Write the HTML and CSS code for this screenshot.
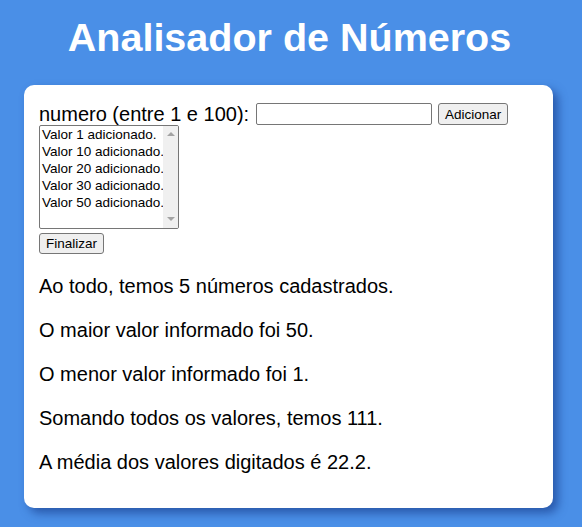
FILE: index.html
```html
<!DOCTYPE html>
<html lang="pt">
<head>
<meta charset="utf-8">
<title>Analisador de Números</title>
<link rel="stylesheet" href="styles.css">
</head>
<body>
<h1 class="title">Analisador de Números</h1>
<main class="card">
  <div class="entry">
    <label class="entry-label" for="num">numero (entre 1 e 100):</label>
    <input class="entry-input" type="number" id="num">
    <button class="btn" type="button">Adicionar</button>
  </div>
  <div class="list" role="listbox">
    <div class="list-items">
      <div class="list-option" role="option">Valor 1 adicionado.</div>
      <div class="list-option" role="option">Valor 10 adicionado.</div>
      <div class="list-option" role="option">Valor 20 adicionado.</div>
      <div class="list-option" role="option">Valor 30 adicionado.</div>
      <div class="list-option" role="option">Valor 50 adicionado.</div>
    </div>
    <div class="scrollbar" aria-hidden="true">
      <span class="arrow arrow-up"></span>
      <span class="arrow arrow-down"></span>
    </div>
  </div>
  <div class="actions">
    <button class="btn btn-small" type="button">Finalizar</button>
  </div>
  <div class="result">
    <p>Ao todo, temos 5 números cadastrados.</p>
    <p>O maior valor informado foi 50.</p>
    <p>O menor valor informado foi 1.</p>
    <p>Somando todos os valores, temos 111.</p>
    <p>A média dos valores digitados é 22.2.</p>
  </div>
</main>
</body>
</html>
```
FILE: styles.css
```css
html, body {
  margin: 0;
  padding: 0;
}
body {
  background: #4a8fe7;
  font-family: "Liberation Sans", Arial, sans-serif;
  color: #000;
  padding: 0 29px 0 24px;
  height: 527px;
  box-sizing: border-box;
  overflow: hidden;
}
.title {
  margin: 0;
  padding-top: 14px;
  height: 85px;
  box-sizing: border-box;
  text-align: center;
  color: #fff;
  font-size: 39.5px;
  font-weight: bold;
  line-height: 46px;
  padding-left: 2px;
}
.card {
  background: #fff;
  border-radius: 10px;
  box-shadow: 5px 5px 10px rgba(30, 70, 150, 0.75);
  padding: 18px 15px 14px 15px;
  box-sizing: border-box;
}
.entry {
  display: flex;
  align-items: center;
  height: 22px;
}
.entry-label {
  font-size: 20px;
  line-height: 23px;
  margin-right: 7px;
}
.entry-input {
  width: 176px;
  height: 22px;
  box-sizing: border-box;
  border: 1px solid #767676;
  border-radius: 2px;
  margin: 0 6px 0 0;
  padding: 1px 2px;
  font-size: 13px;
  -moz-appearance: textfield;
}
.entry-input::-webkit-inner-spin-button,
.entry-input::-webkit-outer-spin-button {
  -webkit-appearance: none;
  margin: 0;
}
.btn {
  font-family: "Liberation Sans", Arial, sans-serif;
  font-size: 13.5px;
  height: 22px;
  width: 70px;
  padding: 0;
  border: 1px solid #767676;
  border-radius: 3px;
  background: #efefef;
  color: #000;
}
.btn-small {
  width: 65px;
  height: 21px;
}
.list {
  display: flex;
  width: 140px;
  height: 104px;
  box-sizing: border-box;
  border: 1px solid #767676;
  border-radius: 2px;
  background: #fff;
  overflow: hidden;
}
.list-items {
  flex: 1;
  font-size: 13.5px;
  padding-top: 0;
  overflow: hidden;
}
.list-option {
  padding: 0 2px;
  line-height: 17px;
  height: 17px;
  white-space: nowrap;
}
.scrollbar {
  width: 15px;
  flex: none;
  background: #f0f0f0;
  display: flex;
  flex-direction: column;
  justify-content: space-between;
  align-items: center;
  padding: 6px 0 7px;
  box-sizing: border-box;
}
.arrow {
  width: 0;
  height: 0;
  border-left: 4px solid transparent;
  border-right: 4px solid transparent;
}
.arrow-up {
  border-bottom: 4px solid #a3a3a3;
}
.arrow-down {
  border-top: 4px solid #a3a3a3;
}
.actions {
  margin-top: 4px;
  height: 21px;
}
.result p {
  margin: 20px 0;
  font-size: 20px;
  line-height: 24px;
}
```
